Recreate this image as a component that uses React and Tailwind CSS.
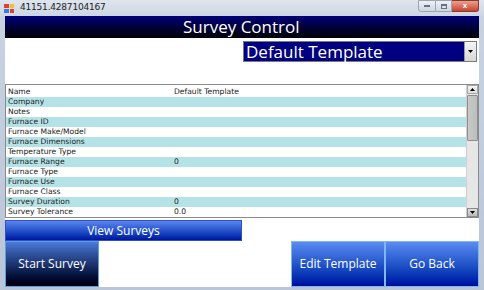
import React from "react"

const rows = [
  ["Name", "Default Template"],
  ["Company", ""],
  ["Notes", ""],
  ["Furnace ID", ""],
  ["Furnace Make/Model", ""],
  ["Furnace Dimensions", ""],
  ["Temperature Type", ""],
  ["Furnace Range", "0"],
  ["Furnace Type", ""],
  ["Furnace Use", ""],
  ["Furnace Class", ""],
  ["Survey Duration", "0"],
  ["Survey Tolerance", "0.0"],
]

const App = () => {
  return (
    <div className="w-[484px] h-[290px] flex flex-col bg-gradient-to-b from-[#c9d3e2] to-[#b9c6d8] font-['Liberation_Sans',sans-serif] overflow-hidden">
      {/* title bar */}
      <div className="h-[16px] flex items-center pl-[4px] pr-[5px] bg-gradient-to-b from-[#dfe5ee] to-[#cdd6e3]">
        <div className="w-[10px] h-[9px] grid grid-cols-2 gap-[1px] mr-[6px]">
          <div className="bg-[#e0402a]" />
          <div className="bg-[#f0c030]" />
          <div className="bg-[#3a7ad8]" />
          <div className="bg-[#e0402a]" />
        </div>
        <span className="text-[9px] text-[#222] font-['DejaVu_Sans',sans-serif] tracking-[-0.2px]">41151.4287104167</span>
        <div className="ml-auto flex items-start self-start">
          <div className="w-[18px] h-[12px] border border-[#9aa4b4] rounded-bl-[3px] bg-gradient-to-b from-[#eef1f6] to-[#cfd6e0] flex items-center justify-center">
            <div className="w-[6px] h-[2px] bg-[#6a7282]" />
          </div>
          <div className="w-[16px] h-[12px] border border-l-0 border-[#9aa4b4] bg-gradient-to-b from-[#eef1f6] to-[#cfd6e0] flex items-center justify-center">
            <div className="w-[6px] h-[5px] border border-[#6a7282] border-t-2" />
          </div>
          <div className="w-[27px] h-[12px] border border-l-0 border-[#8a3a30] rounded-br-[3px] bg-gradient-to-b from-[#e8a090] to-[#c8402c] flex items-center justify-center text-white text-[8px] font-bold leading-none">
            x
          </div>
        </div>
      </div>

      {/* client */}
      <div className="mx-[5px] h-[271px] bg-white flex flex-col">
        <div className="h-[22px] shrink-0 bg-gradient-to-b from-[#00007a] to-[#000008] text-white text-[17px] leading-[22px] pl-[178px] font-['Open_Sans',sans-serif]">
          Survey Control
        </div>

        <div className="h-[46px] shrink-0 flex justify-end pt-[3px] pr-[2px]">
          <div className="w-[234px] h-[21px] flex border border-[#7a7a7a] bg-[#000080]">
            <div className="flex-1 text-white text-[17px] leading-[19px] pl-[2px] font-['Open_Sans',sans-serif] whitespace-nowrap">
              Default Template
            </div>
            <div className="w-[12px] bg-gradient-to-b from-[#f4f4f4] to-[#d8d8d8] border-l border-[#9a9a9a] flex items-center justify-center">
              <svg width="5" height="3" viewBox="0 0 5 3"><path d="M0 0h5L2.5 3z" fill="#000" /></svg>
            </div>
          </div>
        </div>

        <div className="h-[134px] shrink-0 border border-[#8a8a8a] flex">
          <div className="flex-1 flex flex-col pt-[2px] font-['DejaVu_Sans',sans-serif] text-[7.6px] text-[#222]">
            {rows.map(([k, v], i) => (
              <div
                key={k}
                className={`h-[10.15px] flex items-center leading-none ${i % 2 === 1 ? "bg-[#b4e2e7]" : "bg-white"}`}
              >
                <span className="w-[168px] pl-[2px]">{k}</span>
                <span>{v}</span>
              </div>
            ))}
          </div>
          <div className="w-[12px] flex flex-col bg-[#e6e6e6] border-l border-[#d0d0d0]">
            <div className="h-[9px] flex items-center justify-center bg-gradient-to-b from-[#f4f4f4] to-[#dcdcdc] border border-[#a8a8a8]">
              <svg width="5" height="3" viewBox="0 0 5 3"><path d="M0 3h5L2.5 0z" fill="#000" /></svg>
            </div>
            <div className="h-[46px] mt-[1px] bg-gradient-to-r from-[#c8c8c8] to-[#bdbdbd] border border-[#8e8e8e] rounded-[1px]" />
            <div className="flex-1" />
            <div className="h-[9px] flex items-center justify-center bg-gradient-to-b from-[#dcdcdc] to-[#bcbcbc] border border-[#8a8a8a]">
              <svg width="5" height="3" viewBox="0 0 5 3"><path d="M0 0h5L2.5 3z" fill="#000" /></svg>
            </div>
          </div>
        </div>

        <div className="h-[2px] shrink-0" />
        <button className="w-[237px] h-[21px] shrink-0 bg-gradient-to-b from-[#5a86f2] to-[#0010a0] border border-[#3050c0] text-white text-[12px] font-['Open_Sans',sans-serif]">
          View Surveys
        </button>

        <div className="flex-1 flex">
          <button className="w-[94px] bg-gradient-to-b from-[#4a7ad8] via-[#1c3470] to-[#000010] border border-[#5aa0e0] text-white text-[12px] font-['Open_Sans',sans-serif]">
            Start Survey
          </button>
          <div className="flex-1" />
          <button className="w-[94px] bg-gradient-to-b from-[#5a8cf2] to-[#0008a0] border border-[#80b8ee] text-white text-[12px] font-['Open_Sans',sans-serif]">
            Edit Template
          </button>
          <button className="w-[94px] bg-gradient-to-b from-[#5a8cf2] to-[#0008a0] border border-[#80b8ee] text-white text-[12px] font-['Open_Sans',sans-serif]">
            Go Back
          </button>
        </div>
      </div>
    </div>
  )
}

export default App
